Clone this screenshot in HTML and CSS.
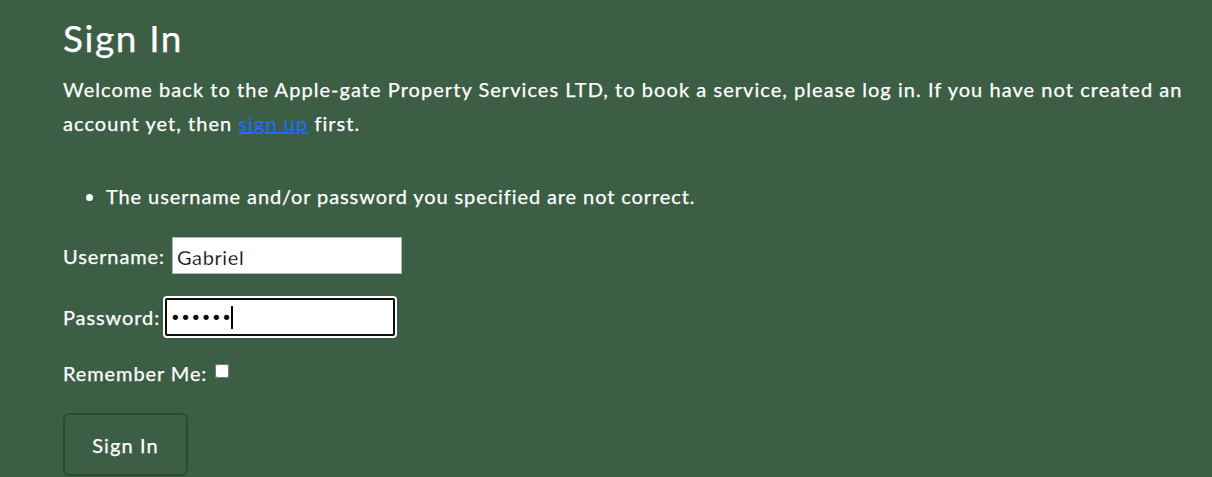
FILE: index.html
```html
<!DOCTYPE html>
<html lang="en">
<head>
<meta charset="utf-8">
<title>Sign In</title>
<link rel="stylesheet" href="styles.css">
</head>
<body>
<main class="page">
  <h1 class="title">Sign In</h1>
  <p class="intro">Welcome back to the Apple-gate Property Services LTD, to book a service, please log in. If you have not created an account yet, then <a href="#" class="link">sign up</a> first.</p>
  <form class="login-form">
    <ul class="errors">
      <li>The username and/or password you specified are not correct.</li>
    </ul>
    <div class="field field-user">
      <label class="label" for="login">Username:</label>
      <input class="input input-user" id="login" type="text" value="Gabriel">
    </div>
    <div class="field field-pass">
      <label class="label label-pass" for="password">Password:</label>
      <span class="input input-pass focused"><span class="dots">••••••</span><span class="caret"></span></span>
    </div>
    <div class="field field-check">
      <label class="label" for="remember">Remember Me:</label>
      <input class="check" id="remember" type="checkbox">
    </div>
    <button class="btn" type="button">Sign In</button>
  </form>
</main>
</body>
</html>
```

FILE: styles.css
```css
html, body {
  margin: 0;
  padding: 0;
  background: #3c5e45;
  height: 100%;
  overflow: hidden;
}
.page {
  padding: 0 20px 0 63px;
  color: #ffffff;
  font-family: Lato, "Liberation Sans", sans-serif;
  font-size: 20px;
  letter-spacing: 0.9px;
  -webkit-text-stroke: 0.25px #ffffff;
}
.title {
  margin: 0;
  padding-top: 16px;
  font-size: 37px;
  font-weight: 400;
  line-height: 44px;
  letter-spacing: 1.6px;
}
.intro {
  margin: 12px 0 0 0;
  line-height: 34px;
  max-width: 1130px;
  letter-spacing: 1.05px;
}
.link {
  color: #1e6ef5;
  -webkit-text-stroke: 0.25px #1e6ef5;
  text-decoration: underline;
}
.login-form {
  margin-top: 41px;
}
.errors {
  margin: 0 0 26px 0;
  padding-left: 43px;
  line-height: 30px;
}
.field {
  display: flex;
  align-items: center;
  margin-bottom: 23px;
}
.field-user {
  margin-bottom: 24px;
}
.field-pass {
  margin-bottom: 25px;
}
.label {
  margin-right: 7px;
}
.label-pass {
  margin-right: 5px;
}
.input {
  box-sizing: border-box;
  width: 230px;
  height: 37px;
  border: 1px solid #b5b5b5;
  background: #ffffff;
  color: #000;
  font-family: Lato, "Liberation Sans", sans-serif;
  font-size: 20px;
  letter-spacing: 0.6px;
  padding: 2px 4px 0 4px;
  margin: 0;
}
.input-pass {
  display: flex;
  align-items: center;
  width: 230px;
  height: 38px;
  border: 2px solid #101010;
  border-radius: 2px;
  box-shadow: 0 0 0 2px #ffffff;
  padding: 0 3px;
  -webkit-text-stroke: 0;
}
.dots {
  font-size: 18px;
  letter-spacing: -0.4px;
  font-family: "DejaVu Sans", sans-serif;
}
.caret {
  width: 2px;
  height: 23px;
  background: #000;
  margin-left: 0;
}
.field-check {
  margin-bottom: 28px;
}
.check {
  width: 14px;
  height: 14px;
  margin: 0 0 4px 1px;
}
.btn {
  background: transparent;
  color: #ffffff;
  border: 2px solid #2e4a35;
  border-radius: 6px;
  font-family: Lato, "Liberation Sans", sans-serif;
  font-size: 20px;
  letter-spacing: 1.1px;
  -webkit-text-stroke: 0.25px #ffffff;
  width: 125px;
  height: 63px;
  padding: 0;
}
```
